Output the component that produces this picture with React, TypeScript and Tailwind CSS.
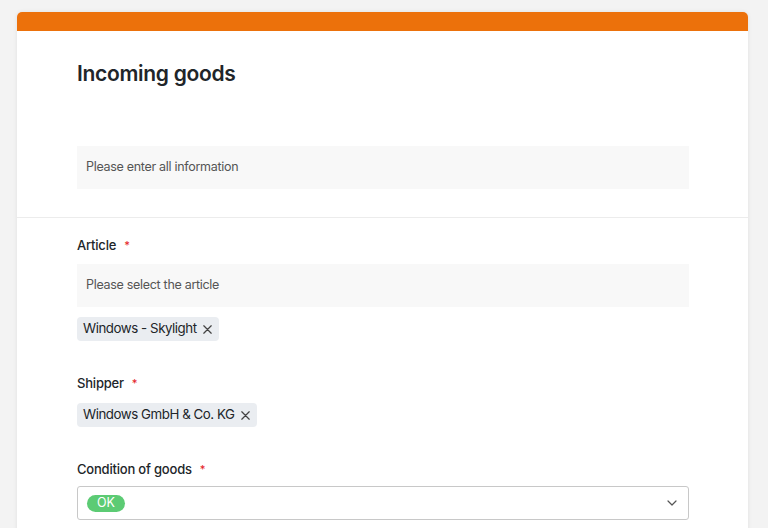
function Label({ text }: { text: string }) {
  return (
    <div className="flex items-center text-[13px] font-medium leading-5 tracking-[-0.2px] text-[#212529]">
      {text}
      <span className="ml-[8px] text-[11px] text-[#e5252a]">*</span>
    </div>
  );
}

function Tag({ text }: { text: string }) {
  return (
    <span className="inline-flex h-[24px] items-center gap-[6px] rounded-[4px] bg-[#eaedf1] pl-[6px] pr-[7px] text-[13.3px] tracking-[-0.45px] text-[#212529]">
      {text}
      <svg width="9" height="9" viewBox="0 0 9 9" className="text-[#444]">
        <path d="M0.8 0.8L8.2 8.2M8.2 0.8L0.8 8.2" stroke="currentColor" strokeWidth="1.25" strokeLinecap="round" />
      </svg>
    </span>
  );
}

export default function App() {
  return (
    <div className="min-h-screen bg-[#f3f3f3] pl-[17px] pr-[20px] pt-[12px]" style={{ fontFamily: 'Inter, "Noto Sans", sans-serif' }}>
      <div className="overflow-hidden rounded-t-[5px] bg-white shadow-[0_0_4px_rgba(0,0,0,0.08)]">
        {/* header bar */}
        <div className="h-[19px] bg-[#ec710b]" />

        {/* title + info */}
        <div className="pb-[28px] pl-[60px] pr-[59px] pt-[29px]">
          <h1 className="text-[21px] font-semibold leading-[28px] tracking-[-0.3px] text-[#212529]">Incoming goods</h1>
          <div className="mt-[58px] flex h-[43px] items-center bg-[#f8f8f8] px-[9px] text-[12.5px] tracking-[-0.3px] text-[#555]">
            Please enter all information
          </div>
        </div>

        <div className="h-px bg-[#ececec]" />

        {/* form */}
        <div className="pb-10 pl-[60px] pr-[59px] pt-[17px]">
          <Label text="Article" />
          <div className="mt-[9px] flex h-[43px] items-center bg-[#f8f8f8] px-[9px] text-[12.5px] tracking-[-0.3px] text-[#555]">
            Please select the article
          </div>
          <div className="mt-[10px] flex">
            <Tag text="Windows - Skylight" />
          </div>

          <div className="mt-[32px]">
            <Label text="Shipper" />
          </div>
          <div className="mt-[10px] flex">
            <Tag text="Windows GmbH & Co. KG" />
          </div>

          <div className="mt-[32px]">
            <Label text="Condition of goods" />
          </div>
          <div className="mt-[7px] flex h-[34px] items-center justify-between rounded-[3px] border border-[#c8c8c8] pl-[9px] pr-[11px]">
            <span className="inline-flex h-[17px] items-center rounded-full bg-[#5ccb74] px-[10px] text-[12.5px] text-white">
              OK
            </span>
            <svg width="10" height="6" viewBox="0 0 10 6" className="text-[#555]">
              <path d="M1 1L5 5L9 1" fill="none" stroke="currentColor" strokeWidth="1.2" strokeLinecap="round" strokeLinejoin="round" />
            </svg>
          </div>
        </div>
      </div>
    </div>
  );
}
